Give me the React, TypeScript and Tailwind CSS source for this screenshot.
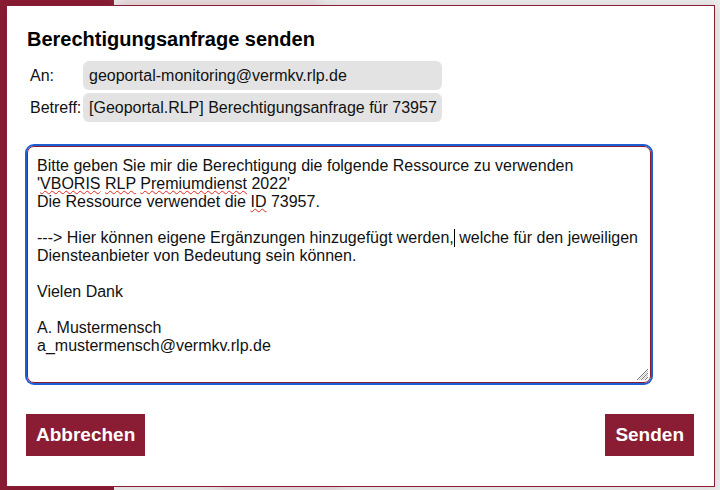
import React from "react";

const maroon = "bg-[#8a1c33]";

function Squiggle({ children }: { children: React.ReactNode }) {
  return (
    <span className="underline decoration-wavy decoration-[#e0281e] decoration-1 underline-offset-[1px] [text-decoration-skip-ink:none]">
      {children}
    </span>
  );
}

export default function App() {
  return (
    <div
      className="relative w-[720px] h-[490px] overflow-hidden bg-[#eeeded]"
      style={{ fontFamily: '"Liberation Sans", Arial, sans-serif' }}
    >
      {/* page behind the dialog */}
      <div className={`absolute left-0 top-0 w-[114px] h-full ${maroon}`} />
      <div className="absolute left-[120px] top-0 w-[200px] h-[8px] bg-[#e3c9d0] blur-[6px]" />
      <div className="absolute left-[220px] bottom-0 w-[120px] h-[6px] bg-[#e3c9d0] blur-[5px]" />

      {/* --- Dialog --- */}
      <div className="absolute left-[6px] top-[5px] w-[709px] h-[482px] bg-white border border-[#8a1c33] shadow-[0_0_12px_rgba(0,0,0,0.12)] flex flex-col">
        <h1 className="mt-[22px] ml-[20px] text-[20px] leading-[23px] font-bold text-black">
          Berechtigungsanfrage senden
        </h1>

        {/* Empfänger / Betreff */}
        <div className="mt-[10px] ml-[23px] flex flex-col gap-[3px] text-[16px] text-[#111]">
          <div className="flex items-center">
            <span className="w-[53px]">An:</span>
            <div className="w-[359px] h-[29px] rounded-[6px] bg-[#e3e3e3] pl-[6px] flex items-center">
              geoportal-monitoring@vermkv.rlp.de
            </div>
          </div>
          <div className="flex items-center">
            <span className="w-[53px]">Betreff:</span>
            <div className="w-[359px] h-[29px] rounded-[6px] bg-[#e3e3e3] pl-[6px] flex items-center whitespace-nowrap">
              [Geoportal.RLP] Berechtigungsanfrage für 73957
            </div>
          </div>
        </div>

        {/* Nachricht */}
        <div className="relative mt-[24px] ml-[20px] w-[624px] h-[237px] rounded-[7px] border border-[#8a1c33] ring-2 ring-[#1c5fd3] pt-[10px] pl-[9px] text-[16px] leading-[18px] text-[#111] whitespace-nowrap">
          <div>Bitte geben Sie mir die Berechtigung die folgende Ressource zu verwenden</div>
          <div>
            '<Squiggle>VBORIS</Squiggle> <Squiggle>RLP</Squiggle> <Squiggle>Premiumdienst</Squiggle> 2022'
          </div>
          <div>
            Die Ressource verwendet die <Squiggle>ID</Squiggle> 73957.
          </div>
          <div>&nbsp;</div>
          <div>
            ---&gt; Hier können eigene Ergänzungen hinzugefügt werden,
            <span className="inline-block w-px h-[18px] bg-black align-top" />
            {" "}welche für den jeweiligen
          </div>
          <div>Diensteanbieter von Bedeutung sein können.</div>
          <div>&nbsp;</div>
          <div>Vielen Dank</div>
          <div>&nbsp;</div>
          <div>A. Mustermensch</div>
          <div>a_mustermensch@vermkv.rlp.de</div>

          {/* resize grip */}
          <svg
            className="absolute right-[1px] bottom-[1px]"
            width="14"
            height="14"
            viewBox="0 0 14 14"
          >
            <path d="M13 2 L2 13 M13 6 L6 13 M13 10 L10 13" stroke="#7a7a7a" strokeWidth="1" />
            <path d="M13 4 L4 13 M13 8 L8 13" stroke="#c4c4c4" strokeWidth="1" />
          </svg>
        </div>

        {/* Buttons */}
        <div className="mt-[31px] ml-[19px] mr-[20px] flex justify-between">
          <button className={`h-[42px] px-[10px] ${maroon} text-white text-[19px] font-bold`}>
            Abbrechen
          </button>
          <button className={`h-[42px] px-[10px] ${maroon} text-white text-[19px] font-bold`}>
            Senden
          </button>
        </div>
      </div>
    </div>
  );
}
